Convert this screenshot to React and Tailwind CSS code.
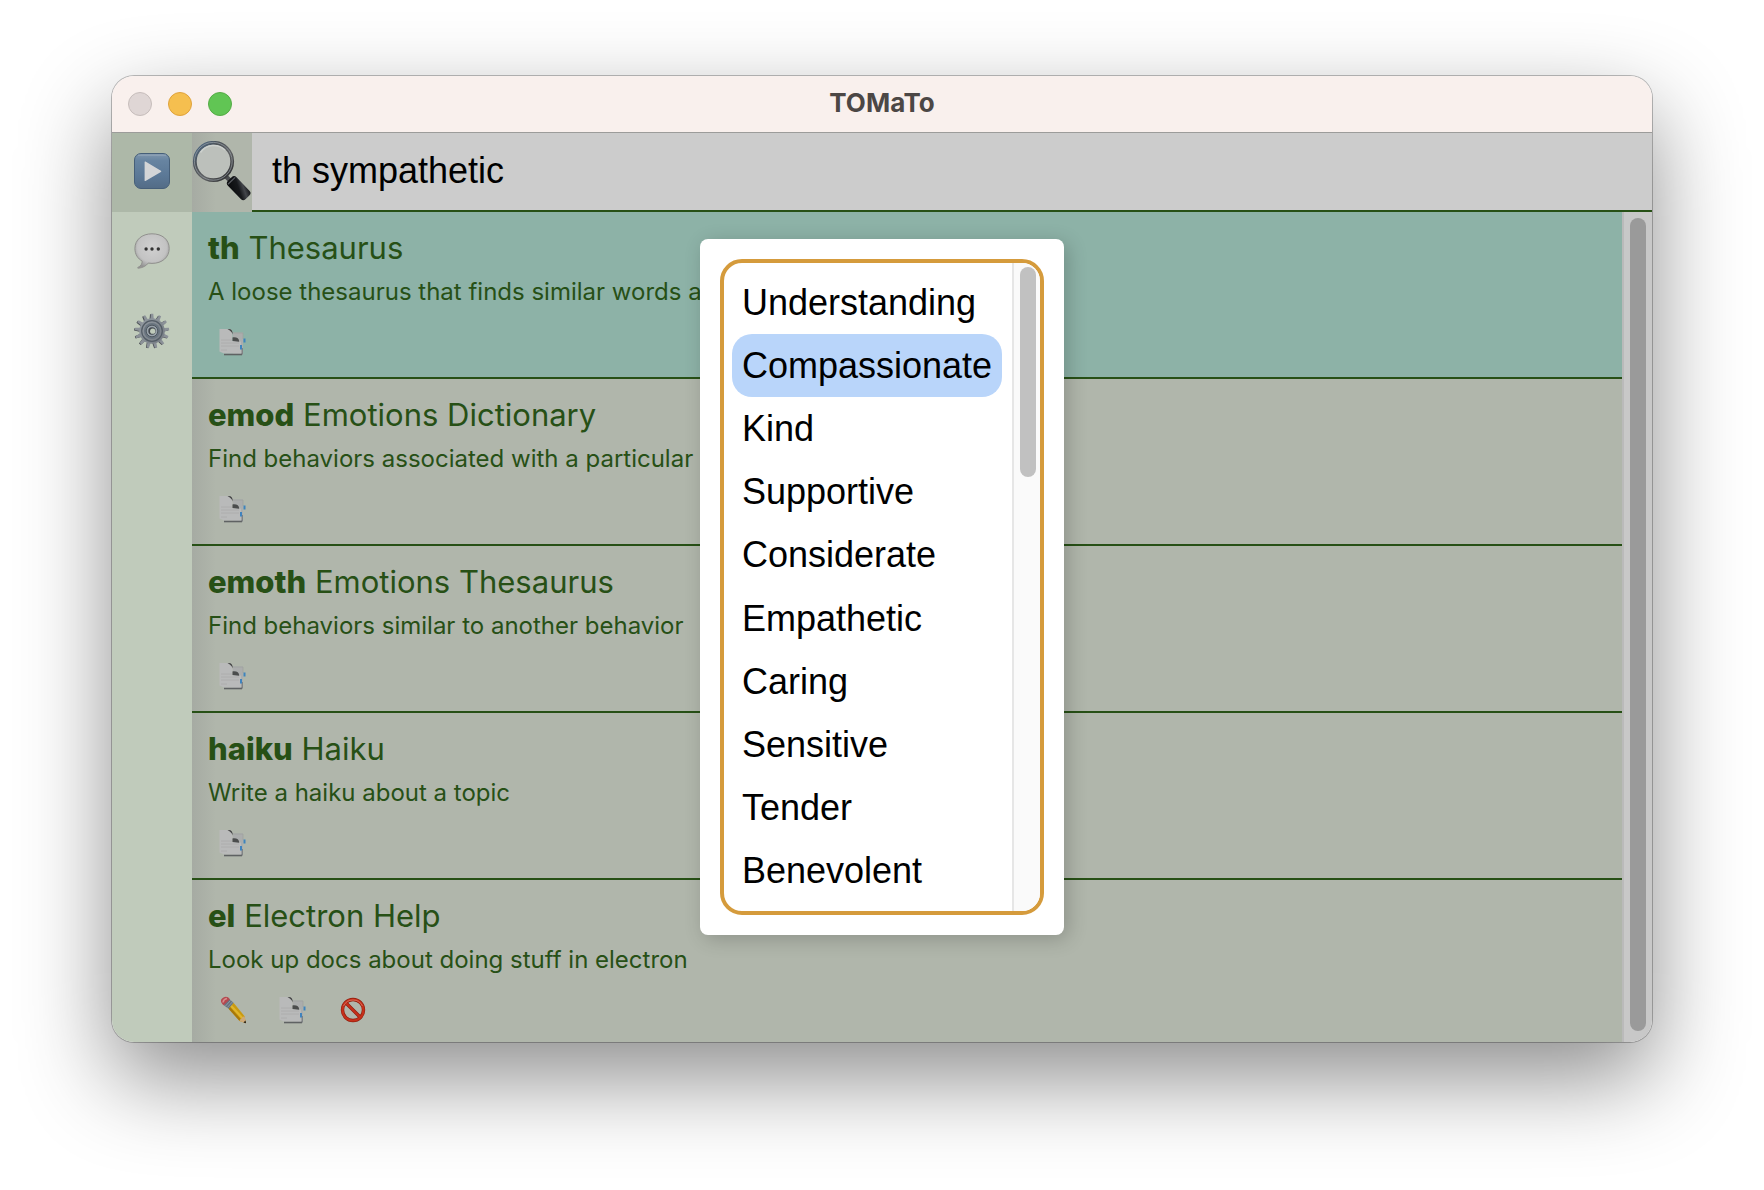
import React from "react";

const COMMANDS = [
  { key: "th", name: "Thesaurus", text: "A loose thesaurus that finds similar words and phrases", selected: true },
  { key: "emod", name: "Emotions Dictionary", text: "Find behaviors associated with a particular emotion" },
  { key: "emoth", name: "Emotions Thesaurus", text: "Find behaviors similar to another behavior" },
  { key: "haiku", name: "Haiku", text: "Write a haiku about a topic" },
  { key: "el", name: "Electron Help", text: "Look up docs about doing stuff in electron", custom: true },
];

const CHOICES = [
  "Understanding",
  "Compassionate",
  "Kind",
  "Supportive",
  "Considerate",
  "Empathetic",
  "Caring",
  "Sensitive",
  "Tender",
  "Benevolent",
];

function PlayIcon() {
  return (
    <svg viewBox="0 0 36 36" className="size-9" aria-hidden="true">
      <defs>
        <linearGradient id="play-face" x1="0" y1="0" x2="0" y2="1">
          <stop offset="0" stopColor="#8197ad" />
          <stop offset="0.2" stopColor="#6784a1" />
          <stop offset="0.65" stopColor="#5b7896" />
          <stop offset="1" stopColor="#536c86" />
        </linearGradient>
      </defs>
      <rect x="0.5" y="0.5" width="35" height="35" rx="6.5" fill="url(#play-face)" stroke="#465f79" />
      <path d="M4 2.2h28" stroke="#a3b2c1" strokeOpacity="0.6" />
      <path d="M10.6 9.2v18.2q0 1 .9.5l15.4-8.9q.9-.6 0-1.2L11.5 8.6q-.9-.4-.9.6z" fill="#d3d5d7" />
    </svg>
  );
}

function BubbleIcon() {
  return (
    <svg viewBox="0 0 36 36" className="size-9" aria-hidden="true">
      <defs>
        <radialGradient id="bubble-face" cx="0.5" cy="0.4" r="0.6">
          <stop offset="0" stopColor="#d0d0d0" />
          <stop offset="0.7" stopColor="#c3c3c3" />
          <stop offset="1" stopColor="#949494" />
        </radialGradient>
      </defs>
      <path
        d="M18 .8C8 .8.9 6.8.9 15.4c0 6 2.900 10.300 7.300 12.700.2 2.600-1.500 5-4.200 6.300-.7.4-.3.9.5.8 4.400-.5 7.700-2.300 9.700-5.100 1.200.2 2.500.3 3.800.3 10.300 0 17.200-6.200 17.200-15S28.300.8 18 .8z"
        fill="url(#bubble-face)"
        stroke="#90908d"
        strokeWidth="1"
      />
      <circle cx="12.100" cy="16" r="1.700" fill="#333" />
      <circle cx="18" cy="16" r="1.700" fill="#333" />
      <circle cx="24.300" cy="16" r="1.700" fill="#333" />
    </svg>
  );
}

const TEETH = Array.from({ length: 13 }, (_, i) => (i * 360) / 13);

function GearIcon() {
  return (
    <svg viewBox="0 0 36 36" className="size-9" aria-hidden="true">
      <defs>
        <linearGradient id="gear-face" x1="0" y1="0" x2="1" y2="1">
          <stop offset="0" stopColor="#929aa1" />
          <stop offset="1" stopColor="#757b82" />
        </linearGradient>
      </defs>
      <g fill="#474b50" transform="translate(-0.8 0.4)">
        {TEETH.map((angle) => (
          <path key={angle} d="M16.300 6.500 16.800.9h2.400l.5 5.600z" transform={`rotate(${angle} 18 18)`} />
        ))}
      </g>
      <g fill="#8b9198">
        {TEETH.map((angle) => (
          <path key={angle} d="M16.400 6.500 16.900.8h2.400l.5 5.700z" transform={`rotate(${angle} 18 18)`} />
        ))}
      </g>
      <circle cx="18" cy="18" r="12.800" fill="url(#gear-face)" />
      <circle cx="18" cy="18" r="10.300" fill="none" stroke="#535c65" strokeWidth="1.200" />
      <circle cx="18" cy="18" r="8" fill="#69747f" />
      <circle cx="18" cy="18" r="5.800" fill="#99a2aa" stroke="#4b535a" strokeWidth="0.900" />
      <circle cx="18" cy="18" r="3.700" fill="#43494f" />
      <circle cx="18.700" cy="18.200" r="2.600" fill="#c0cbbb" />
    </svg>
  );
}

function MagnifierIcon() {
  return (
    <svg viewBox="0 0 60 60" className="size-15" aria-hidden="true">
      <defs>
        <linearGradient id="lens-rim" x1="0" y1="0" x2="1" y2="1">
          <stop offset="0" stopColor="#4f7091" />
          <stop offset="0.3" stopColor="#4c5258" />
          <stop offset="0.6" stopColor="#606264" />
          <stop offset="1" stopColor="#222326" />
        </linearGradient>
        <linearGradient id="lens-handle" x1="0" y1="1" x2="1" y2="0">
          <stop offset="0" stopColor="#08090a" />
          <stop offset="0.5" stopColor="#17191c" />
          <stop offset="0.72" stopColor="#43464b" />
          <stop offset="1" stopColor="#0b0c0e" />
        </linearGradient>
      </defs>
      <path d="M33.500 35l6 6" stroke="#4b4d50" strokeWidth="4.500" />
      <circle cx="21.500" cy="20.500" r="18.700" fill="#bcc0bb" stroke="url(#lens-rim)" strokeWidth="3.800" />
      <circle cx="21.300" cy="20.300" r="18.900" fill="none" stroke="#a2aab1" strokeWidth="0.900" strokeOpacity="0.700" />
      <path d="M8.500 11.500A16 16 0 0 1 33 9" fill="none" stroke="#cdd1ce" strokeWidth="1.500" />
      <g transform="rotate(46 46.500 47)">
        <rect x="34" y="41" width="25.500" height="12" rx="3.500" fill="url(#lens-handle)" />
        <path d="M36.500 42v10" stroke="#5b5e63" strokeWidth="1.200" />
      </g>
    </svg>
  );
}

function PagesIcon() {
  return (
    <svg viewBox="0 0 28 28" className="size-7" aria-hidden="true">
      <path d="M14 4.500h10v22H14z" fill="#abadad" />
      <path d="M14 5h10M24 5v6" stroke="#9da09f" strokeWidth="0.700" fill="none" />
      <path d="M5 25.500h18v1.800H5z" fill="#5f6263" />
      <path d="M23.300 20v6.500" stroke="#7b7e80" strokeWidth="1.200" />
      <path d="M.5 1h11l2 2.500v9.500l8.500.5V25.500H5L.5 23.500z" fill="#b9baba" />
      <path d="M8.500 1c3.800-.5 5.500 1.300 5.200 5.500-.8-2.500-2.300-3.800-5.200-5.500z" fill="#454646" />
      <path d="M13.500 9.500c3.800-.6 6.700.8 6.700 4.300l-6.700-.8z" fill="#4b4d4d" />
      <path d="M2 12h11M2 15h18M2 18h18M2 22h6" stroke="#a9abab" strokeWidth="0.800" />
      <path d="M24.500 10.500h2v4h-2zM21 17h2v4.500h-2z" fill="#3f83bd" />
    </svg>
  );
}

function PencilIcon() {
  return (
    <svg viewBox="0 0 28 28" className="size-7" aria-hidden="true">
      <path d="M9.600 12.800 14.500 6.800 25.600 20.200 27 27.200 20.600 25z" fill="#c99a10" />
      <path d="M12 9.800 23.500 22.300" stroke="#e0b52c" strokeWidth="2.200" />
      <path d="M9.600 12.800 20.600 25l1.500-1.500L11 11z" fill="#a8780a" />
      <path d="M20.600 25c.3-1.500 1-2 2-2.200.2-1.400 1.200-2.300 3-2.600L27 27.200z" fill="#cda878" />
      <path d="M24.500 26.400 27 27.200l-.5-2.600z" fill="#1c1712" />
      <path d="M4.500 9 10 2.800l4.500 4-4.900 6z" fill="#66727f" />
      <path d="M6.500 10 11.500 4.500M8.300 11.500l5-5.500" stroke="#9aa4ae" strokeWidth="0.800" />
      <path d="M4.600 9.200C2.400 7 1.200 5.300 2.400 3.300 4 1 7-.2 9 1.300l2 2z" fill="#b5484f" />
      <path d="M4 6.500Q4.500 3 8 2.500" stroke="#d48c8c" strokeWidth="1.600" fill="none" />
    </svg>
  );
}

function BlockIcon() {
  return (
    <svg viewBox="0 0 28 28" className="size-7" aria-hidden="true">
      <circle cx="14" cy="14" r="10.500" fill="none" stroke="#8f1c0c" strokeWidth="3.400" />
      <path d="M6.500 6.500l15 15" stroke="#8f1c0c" strokeWidth="3.400" />
      <circle cx="14" cy="14" r="10.500" fill="none" stroke="#c5301a" strokeWidth="2.200" />
      <path d="M6.500 6.500l15 15" stroke="#c5301a" strokeWidth="2.200" />
      <path d="M4.500 10A10.500 10.500 0 0 1 23.500 10" fill="none" stroke="#d8705c" strokeWidth="0.900" />
    </svg>
  );
}

function ActionButton({ label, children }) {
  return (
    <button type="button" aria-label={label} className="flex h-8 w-13 items-center justify-center pr-0.5">
      {children}
    </button>
  );
}

function CommandRow({ command }) {
  const background = command.selected
    ? "bg-[#8db2a7]"
    : "bg-[linear-gradient(to_right,#a6aba3,#b0b6ab_24px)]";
  return (
    <li className={`h-[167px] shrink-0 border-b-2 border-[#275016] px-4 pt-4 ${background}`}>
      <h2 className="text-[31px] leading-10">
        <b className="font-extrabold">{command.key}</b> {command.name}
      </h2>
      <p className="mt-1 text-2xl leading-10 whitespace-nowrap">{command.text}</p>
      <div className="mt-3.5 flex gap-2">
        {command.custom && (
          <ActionButton label="Edit">
            <PencilIcon />
          </ActionButton>
        )}
        <ActionButton label="Duplicate">
          <PagesIcon />
        </ActionButton>
        {command.custom && (
          <ActionButton label="Disable">
            <BlockIcon />
          </ActionButton>
        )}
      </div>
    </li>
  );
}

function ChoicePopup() {
  return (
    <div className="pointer-events-none absolute inset-0 flex items-center justify-center pb-px">
      <div
        role="dialog"
        aria-label="Results"
        className="pointer-events-auto rounded-lg bg-white p-5 shadow-[4px_4px_20px_rgba(0,0,0,0.2)]"
      >
        <div className="flex h-[656px] overflow-hidden rounded-[22px] border-4 border-[#d59b3c]">
          <ul className="flex flex-col py-2 pr-2.5 pl-2 font-['Liberation_Sans',Arial,sans-serif] text-4xl text-black">
            {CHOICES.map((choice) => (
              <li key={choice} className="flex flex-1">
                <button
                  type="button"
                  className={`flex-1 rounded-[20px] px-2.5 text-left leading-none ${
                    choice === "Compassionate" ? "bg-[#b9d5fa]" : ""
                  }`}
                >
                  {choice}
                </button>
              </li>
            ))}
          </ul>
          <div className="w-7 border-l-2 border-[#e6e6e6] bg-[#fafafa] pt-1 pl-1.5">
            <div className="h-[210px] w-4 rounded-full bg-[#c1c1c1]" />
          </div>
        </div>
      </div>
    </div>
  );
}

export default function App() {
  return (
    <div className="flex h-screen flex-col overflow-hidden bg-white px-28 pt-[76px] pb-[148px] font-[Inter,sans-serif]">
      <main className="flex min-h-0 flex-1 flex-col overflow-hidden rounded-[22px] shadow-[0_0_0_1px_rgba(0,0,0,0.25),0_36px_90px_rgba(0,0,0,0.45)]">
        <header className="grid h-14 shrink-0 grid-cols-[1fr_auto_1fr] items-center bg-[#f9f0ed] px-4">
          <div className="flex gap-4">
            <button type="button" aria-label="Close" className="size-6 rounded-full border border-[#c6bdbb] bg-[#dfd6d5]" />
            <button type="button" aria-label="Minimize" className="size-6 rounded-full border border-[#dfa23c] bg-[#f5bf4f]" />
            <button type="button" aria-label="Zoom" className="size-6 rounded-full border border-[#55ab46] bg-[#61c554]" />
          </div>
          <h1 className="pb-0.5 text-[26px] leading-8 font-bold text-[#4c4745]">TOMaTo</h1>
        </header>

        <div className="relative flex min-h-0 flex-1 border-t border-[#9c9c9a]">
          <nav className="flex w-20 shrink-0 flex-col bg-[#c0cbbb]">
            <button type="button" aria-label="Run" className="flex h-[79px] items-center justify-center bg-[#adb8a8] pb-1">
              <PlayIcon />
            </button>
            <button type="button" aria-label="Chat" className="flex h-20 items-center justify-center pb-0.5">
              <BubbleIcon />
            </button>
            <button type="button" aria-label="Settings" className="flex h-20 items-center justify-center pb-0.5">
              <GearIcon />
            </button>
          </nav>

          <div className="flex min-w-0 flex-1 flex-col">
            <div className="flex h-[79px] shrink-0">
              <label
                htmlFor="search"
                aria-label="Search"
                className="flex w-15 items-start bg-[linear-gradient(to_right,#a6aba3,#b0b6ab_24px)] pt-2"
              >
                <MagnifierIcon />
              </label>
              <input
                id="search"
                type="text"
                defaultValue="th sympathetic"
                className="min-w-0 flex-1 border-b-2 border-[#275016] bg-[#cccccc] px-5 pb-0.5 font-['Liberation_Sans',Arial,sans-serif] text-4xl text-black outline-none"
              />
            </div>
            <div className="flex min-h-0 flex-1">
              <ul className="flex min-w-0 flex-1 flex-col overflow-hidden text-[#275016]">
                {COMMANDS.map((command) => (
                  <CommandRow key={command.key} command={command} />
                ))}
              </ul>
              <div className="flex w-[30px] border-l-2 border-[#bababa] bg-[#c8c8c8] pt-1.5 pb-[11px] pl-1.5">
                <div className="w-4 rounded-full bg-[#9a9a9a]" />
              </div>
            </div>
          </div>

          <ChoicePopup />
        </div>
      </main>
    </div>
  );
}
